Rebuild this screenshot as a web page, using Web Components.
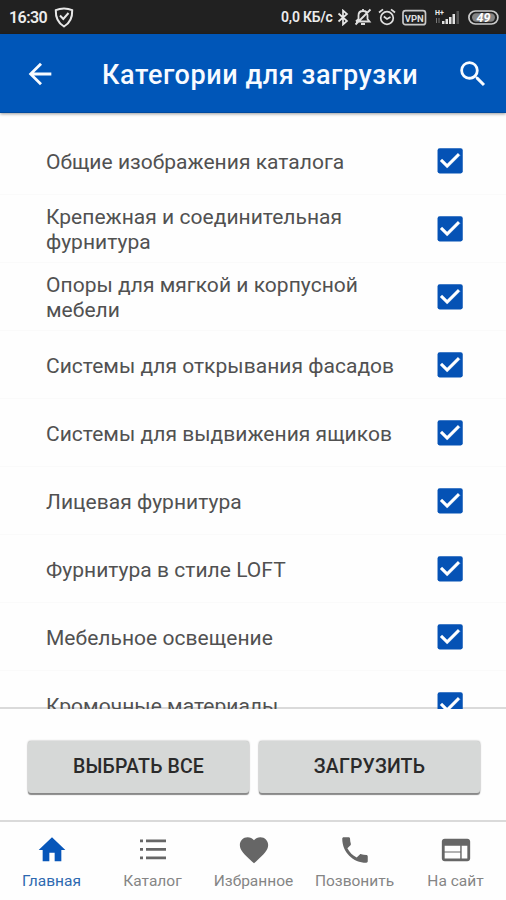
<!DOCTYPE html>
<html lang="ru"><head><meta charset="utf-8"><title>Категории для загрузки</title>
<style>html,body{margin:0;height:100%;overflow:hidden;background:#fefefe;font-family:Roboto,"Noto Sans",sans-serif}</style></head>
<body><catalog-app></catalog-app>
<script>
const define = (name, html) => customElements.define(name, class extends HTMLElement {
  constructor() {
    super();
    const t = document.createElement('template');
    t.innerHTML = html;
    this.attachShadow({mode: 'open'}).append(t.content.cloneNode(true));
  }
});

define('status-bar', `<style>
:host{display:flex;align-items:center;height:34px;flex:none;box-sizing:border-box;background:#212121;color:#ececec;padding:0 6px 0 9px;font-weight:600}
.time{font-size:16px;width:38px;letter-spacing:-.55px;white-space:nowrap}
.rate{font-size:14px;width:54px;letter-spacing:-.2px;margin-left:auto;white-space:nowrap}
svg{display:block;flex:none}
</style>
<span class="time">16:30</span>
<svg style="margin-left:7px" width="20" height="21" viewBox="0 0 20 21" fill="none" stroke="#e8e8e8" stroke-width="2"><path d="M10 1.5C13 1.5 16 2.2 18.2 3.2C18.5 11 16 16 10 19.5C4 16 1.5 11 1.8 3.2C4 2.2 7 1.5 10 1.5Z"/><path d="M6 8.5L9.3 12L14.5 6"/></svg>
<span class="rate">0,0 КБ/с</span>
<svg style="margin-left:2px" width="12" height="17" viewBox="0 0 12 17" fill="none" stroke="#e8e8e8" stroke-width="1.7"><path d="M1.500 4.500L10 12L6 15.500V1.500L10 5L1.500 12.500"/></svg>
<svg style="margin-left:5px" width="18" height="18" viewBox="0 0 18 18" fill="none" stroke="#e0e0e0" stroke-width="1.8"><path d="M2 13.500H15.500L13.500 11V7.500C13.500 4.500 11.500 3 9 3S4.500 4.500 4.500 7.500V11L2 13.500M7 16H11M9 1V3M16.500 1.500L1.500 16.500"/></svg>
<svg style="margin-left:6px" width="18" height="18" viewBox="0 0 18 18" fill="none" stroke="#e0e0e0" stroke-width="1.7"><circle cx="9" cy="10" r="6.300"/><path d="M1 4.500L5 1.300M17 4.500L13 1.300M5.800 8.500L9 11L12.500 9"/></svg>
<svg style="margin-left:6px" width="25" height="17" viewBox="0 0 25 17"><rect x="1" y="1.700" width="22.500" height="14" rx="2.500" fill="none" stroke="#c8c8c8" stroke-width="1.700"/><text x="12.300" y="12.500" text-anchor="middle" font-family="Roboto" font-size="9.500" font-weight="700" fill="#ddd" textLength="19">VPN</text></svg>
<svg style="margin-left:8px" width="26" height="20" viewBox="0 0 26 20"><text x="0" y="8" font-family="Roboto" font-size="7" font-weight="700" fill="#eee">H+</text><path d="M1.500 11V16M4 11V16" stroke="#777"/><path d="M7 14H9.500V17H7ZM10.500 12H13V17H10.500ZM14 10H16.500V17H14ZM17.500 7H20V17H17.500Z" fill="#e2e2e2"/><path d="M21.500 4H24V17H21.500Z" fill="#555"/></svg>
<svg style="margin-left:6px" width="33" height="17" viewBox="0 0 33 17"><rect x="1.900" y="2" width="29" height="13" rx="6.500" fill="#222" stroke="#ccc" stroke-width="1.700"/><rect x="5" y="4.300" width="23" height="8.400" rx="4.200" fill="#858585"/><text x="16.500" y="13" text-anchor="middle" font-family="Roboto" font-size="12.500" font-style="italic" font-weight="700" fill="#fff">49</text></svg>`);

define('app-header', `<style>
:host{display:grid;grid-template-columns:102px 1fr 60px;align-items:center;height:79px;margin-bottom:-1px;flex:none;background:#0056b8;color:#f8fbff;border-bottom:1px solid #004a9f;box-shadow:0 1px 3px #0006;box-sizing:border-box;position:relative;z-index:2}
h1{margin:4px 0 0;font-size:27px;line-height:34px;font-weight:500;letter-spacing:.57px;white-space:nowrap}
svg{display:block}.back{margin:1px 0 0 23px}.find{margin:1px 0 0 10px}
</style>
<svg class="back" width="34" height="34" viewBox="0 0 24 24" fill="currentColor"><path d="M20 11H7.830l5.590-5.590L12 4l-8 8 8 8 1.410-1.410L7.830 13H20v-2z"/></svg>
<h1><slot></slot></h1>
<svg class="find" width="34" height="34" viewBox="0 0 24 24" fill="currentColor"><path d="M15.500 14h-.79l-.28-.27A6.471 6.471 0 0 0 16 9.500 6.500 6.500 0 1 0 9.500 16c1.610 0 3.090-.59 4.230-1.570l.27.28v.79l5 4.990L20.490 19l-4.990-5zm-6 0C7.010 14 5 11.990 5 9.500S7.010 5 9.500 5 14 7.010 14 9.500 11.990 14 9.500 14z"/></svg>`);

define('category-row', `<style>
:host{display:flex;align-items:center;height:68px;box-sizing:border-box;border-bottom:1px solid #fafafa;padding:0 39px 0 46px;color:#515151;font-size:21px;line-height:25px;letter-spacing:.03px}
span{flex:1;white-space:nowrap;padding-top:3px}svg{display:block;flex:none}
</style><span><slot></slot></span>
<svg width="34" height="34" viewBox="0 0 24 24"><rect x="3.200" y="3" width="17.800" height="17.800" rx="1.500" fill="#0552b5"/><path fill="#fff" stroke="#fff" stroke-width=".3" d="M10 17l-5-5 1.410-1.410L10 14.170l7.590-7.590L19 8z"/></svg>`);

define('action-button', `<style>
:host{display:block;flex:1}
button{display:block;width:100%;height:52px;border:0;border-radius:3px;background:#d6d8d7;color:#2a2a2a;font:500 19.500px/52px Roboto,sans-serif;letter-spacing:.15px;padding:0;box-shadow:0 2px 1px #888,0 0 2px #999}
</style><button><slot></slot></button>`);

define('nav-item', `<style>
:host{display:flex;flex-direction:column;align-items:center;flex:1 1 0;min-width:0;color:#858585;font-size:15.500px;line-height:20px;white-space:nowrap;--icon:#666}
:host([active]){color:#2d69b0;--icon:#0756b9}
.icon{height:38px;color:var(--icon)}
</style><div class="icon"><slot name="icon"></slot></div><slot></slot>`);

define('catalog-app', `<style>
:host{display:flex;flex-direction:column;height:900px;width:506px;overflow:hidden;background:#fefefe}
main{height:597px;margin-bottom:-2px;position:relative;z-index:1;flex:none;box-sizing:border-box;padding-top:15px;overflow:hidden}
.actions{display:flex;gap:10px;height:113px;flex:none;box-sizing:border-box;padding:32px 26px 0 28px;border-top:2px solid #dadada}
nav{display:flex;height:80px;flex:none;box-sizing:border-box;padding:11px 0 0 1px;border-top:2px solid #dadada}
svg{display:block;fill:currentColor}
</style>
<status-bar></status-bar>
<app-header>Категории для загрузки</app-header>
<main>
<category-row>Общие изображения каталога</category-row>
<category-row>Крепежная и соединительная<br>фурнитура</category-row>
<category-row>Опоры для мягкой и корпусной<br>мебели</category-row>
<category-row>Системы для открывания фасадов</category-row>
<category-row>Системы для выдвижения ящиков</category-row>
<category-row>Лицевая фурнитура</category-row>
<category-row>Фурнитура в стиле LOFT</category-row>
<category-row>Мебельное освещение</category-row>
<category-row>Кромочные материалы</category-row>
</main>
<div class="actions"><action-button>ВЫБРАТЬ ВСЕ</action-button><action-button>ЗАГРУЗИТЬ</action-button></div>
<nav>
<nav-item active><svg slot="icon" width="32" height="34" viewBox="0 0 24 24" preserveAspectRatio="none"><path d="M10 20v-6h4v6h5v-8h3L12 3 2 12h3v8z"/></svg>Главная</nav-item>
<nav-item><svg slot="icon" width="34" height="34" viewBox="0 0 34 34"><path d="M4 6.500H7V9.200H4ZM10 6.500H30V9.200H10ZM4 15H7V17.700H4ZM10 15H30V17.700H10ZM4 23.500H7V26.200H4ZM10 23.500H30V26.200H10Z"/></svg>Каталог</nav-item>
<nav-item><svg slot="icon" width="34" height="34" viewBox="0 0 24 24"><path d="M12 21.350l-1.450-1.320C5.400 15.360 2 12.280 2 8.500 2 5.420 4.420 3 7.500 3c1.740 0 3.410.81 4.500 2.090C13.090 3.810 14.760 3 16.500 3 19.580 3 22 5.420 22 8.500c0 3.780-3.400 6.860-8.550 11.540L12 21.350z"/></svg>Избранное</nav-item>
<nav-item><svg slot="icon" width="34" height="34" viewBox="0 0 24 24"><path d="M6.620 10.790c1.440 2.830 3.760 5.140 6.590 6.590l2.200-2.200c.27-.27.67-.36 1.020-.24 1.120.37 2.330.57 3.570.57.550 0 1 .45 1 1V20c0 .55-.45 1-1 1-9.390 0-17-7.610-17-17 0-.55.45-1 1-1h3.500c.55 0 1 .45 1 1 0 1.250.2 2.450.57 3.570.11.350.03.74-.25 1.020l-2.200 2.200z"/></svg>Позвонить</nav-item>
<nav-item><svg slot="icon" width="34" height="34" viewBox="0 0 24 24"><path d="M20 4H4c-1.100 0-1.990.9-1.990 2L2 18c0 1.100.9 2 2 2h16c1.100 0 2-.9 2-2V6c0-1.100-.9-2-2-2zM15 18H4V13.800H15ZM15 13H4V9H15ZM20 18H16V9H20Z"/></svg>На сайт</nav-item>
</nav>`);
</script></body></html>
